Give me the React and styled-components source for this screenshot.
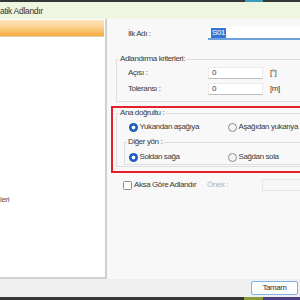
import React from 'react'
import styled, { createGlobalStyle } from 'styled-components'

const GlobalStyle = createGlobalStyle`
  html, body {
    margin: 0;
    width: 300px;
    height: 300px;
    overflow: hidden;
  }
  body {
    font-family: "Liberation Sans", Arial, sans-serif;
    font-size: 8px;
    line-height: 10px;
    letter-spacing: -0.4px;
    color: #3a3a3a;
  }
  * { box-sizing: border-box; }
`

const Window = styled.div`
  width: 300px;
  height: 300px;
  display: flex;
  flex-direction: column;
  background: #f8f8f8;
  overflow: hidden;
`

const EdgeStrip = styled.div`
  height: ${props => props.h}px;
  flex-shrink: 0;
  display: flex;
  background: #363636;
`

const StripSpot = styled.span`
  margin-left: ${props => props.left}px;
  width: ${props => props.w}px;
  background: ${props => props.color};
`

const TitleBar = styled.div`
  height: 17px;
  flex-shrink: 0;
  display: flex;
  align-items: center;
  background: #eef6e1;
  font-size: 8.5px;
  color: #333;
  letter-spacing: -0.3px;
`

const Body = styled.div`
  flex: 1;
  display: flex;
  min-height: 0;
`

const LeftPanel = styled.div`
  width: 107px;
  flex-shrink: 0;
  display: flex;
  flex-direction: column;
  background: #fff;
  border-right: 2px solid #d0d0d0;
  border-bottom: 2px solid #d0d0d0;
`

const ListHeader = styled.div`
  height: 17px;
  margin: 1px 1px 0 0;
  background: linear-gradient(#fde3bb 0%, #fcd497 40%, #f9bd5f 75%, #f6aa3c 95%, #f3c98a 100%);
  border-bottom: 1px solid #e3c9a0;
`

const TreeText = styled.div`
  margin-top: 158px;
  color: #555;
`

const RightPanel = styled.div`
  flex: 1;
  overflow: hidden;
  padding: 8px 0 0 4px;
`

const Content = styled.div`
  width: 240px;
  display: flex;
  flex-direction: column;
`

const NameRow = styled.div`
  height: 13px;
  display: flex;
  align-items: center;
  padding-left: 17px;
`

const Label = styled.span`
  width: ${props => props.w}px;
  flex-shrink: 0;
  color: ${props => (props.disabled ? '#b4b4b4' : '#3a3a3a')};
`

const NameInput = styled.div`
  flex: 1;
  height: 13px;
  display: flex;
  align-items: center;
  padding-left: 3px;
  background: #fff;
  border-bottom: 2px solid #6fa0da;
`

const Selection = styled.span`
  background: #3474d2;
  color: #fff;
  padding: 0 1px;
`

const Group = styled.fieldset`
  margin: ${props => props.margin || '0'};
  border: 1px solid #dedede;
  padding: ${props => props.pad};
  min-width: 0;
`

const Legend = styled.legend`
  padding: 0 1px;
  line-height: 10px;
`

const CritRow = styled.div`
  height: 12px;
  display: flex;
  align-items: center;
  padding-left: 9px;
  & + & {
    margin-top: 4px;
  }
`

const SmallInput = styled.div`
  width: 55px;
  height: 12px;
  display: flex;
  align-items: center;
  padding-left: 3px;
  background: #fff;
  border: 1px solid #ececec;
  border-bottom-color: #bdbdbd;
`

const Unit = styled.span`
  margin-left: 7px;
`

const Highlight = styled.div`
  margin-top: 4px;
  border: 2px solid #e6202a;
  padding: 0 0 4px 3px;
`

const RadioRow = styled.div`
  height: 10px;
  display: grid;
  grid-template-columns: 99px auto;
  align-items: center;
  padding-left: ${props => props.indent}px;
`

const RadioItem = styled.label`
  display: flex;
  align-items: center;
  gap: 1.5px;
`

const RadioDot = styled.span`
  width: 9px;
  height: 9px;
  border-radius: 50%;
  flex-shrink: 0;
  ${props => props.checked
    ? 'background: radial-gradient(circle, #fff 0 1.7px, #1c5fbe 2.2px);'
    : 'background: #f4f4f4; border: 1px solid #8c8c8c;'}
`

const CheckRow = styled.div`
  margin-top: 6px;
  height: 12px;
  display: flex;
  align-items: center;
  padding-left: 12px;
`

const CheckItem = styled.label`
  width: 84px;
  flex-shrink: 0;
  display: flex;
  align-items: center;
  gap: 2px;
`

const CheckBox = styled.span`
  width: 9px;
  height: 9px;
  border: 1px solid #8c8c8c;
  border-radius: 1.5px;
  background: #fbfbfb;
`

const DisabledInput = styled.div`
  flex: 1;
  height: 12px;
  border: 1px solid #e4e4e4;
  background: #f7f7f7;
`

const Footer = styled.div`
  height: 18px;
  flex-shrink: 0;
  display: flex;
  align-items: center;
  justify-content: flex-end;
  padding-right: 2px;
  background: #f0f0f0;
`

const Button = styled.button`
  width: 47px;
  height: 14px;
  padding: 0;
  border: 1px solid #7fb3e8;
  border-radius: 2px;
  background: #fdfdfd;
  font: inherit;
  letter-spacing: inherit;
  color: #333;
`

const Radio = ({ checked, children }) => (
  <RadioItem>
    <RadioDot checked={checked} />
    <span>{children}</span>
  </RadioItem>
)

export default function App() {
  return (
    <Window>
      <GlobalStyle />
      <EdgeStrip h={2}>
        <StripSpot left={245} w={18} color="#3a9cb6" />
      </EdgeStrip>
      <TitleBar>atik Adlandır</TitleBar>
      <Body>
        <LeftPanel>
          <ListHeader />
          <TreeText>leri</TreeText>
        </LeftPanel>
        <RightPanel>
          <Content>
            <NameRow>
              <Label w={80}>İlk Adı :</Label>
              <NameInput><Selection>S01</Selection></NameInput>
            </NameRow>

            <Group margin="14px 0 0 5px" pad="3px 0 6px 2px">
              <Legend>Adlandırma kriterleri:</Legend>
              <CritRow>
                <Label w={80}>Açısı :</Label>
                <SmallInput>0</SmallInput>
                <Unit>[°]</Unit>
              </CritRow>
              <CritRow>
                <Label w={80}>Toleransı :</Label>
                <SmallInput>0</SmallInput>
                <Unit>[m]</Unit>
              </CritRow>
            </Group>

            <Highlight>
              <Group pad="4px 0 1px 2px">
                <Legend>Ana doğrultu  :</Legend>
                <RadioRow indent={10}>
                  <Radio checked>Yukarıdan aşağıya</Radio>
                  <Radio>Aşağıdan yukarıya</Radio>
                </RadioRow>
                <Group margin="5px 0 0 5px" pad="5px 0 2px 2px">
                  <Legend>Diğer yön :</Legend>
                  <RadioRow indent={2}>
                    <Radio checked>Soldan sağa</Radio>
                    <Radio>Sağdan sola</Radio>
                  </RadioRow>
                </Group>
              </Group>
            </Highlight>

            <CheckRow>
              <CheckItem>
                <CheckBox />
                <span>Aksa Göre Adlandır</span>
              </CheckItem>
              <Label w={55} disabled>Önek :</Label>
              <DisabledInput />
            </CheckRow>
          </Content>
        </RightPanel>
      </Body>
      <Footer>
        <Button>Tamam</Button>
      </Footer>
      <EdgeStrip h={3}>
        <StripSpot left={244} w={19} color="#8a9a3c" />
        <StripSpot left={0} w={37} color="#4b3f80" />
      </EdgeStrip>
    </Window>
  )
}
